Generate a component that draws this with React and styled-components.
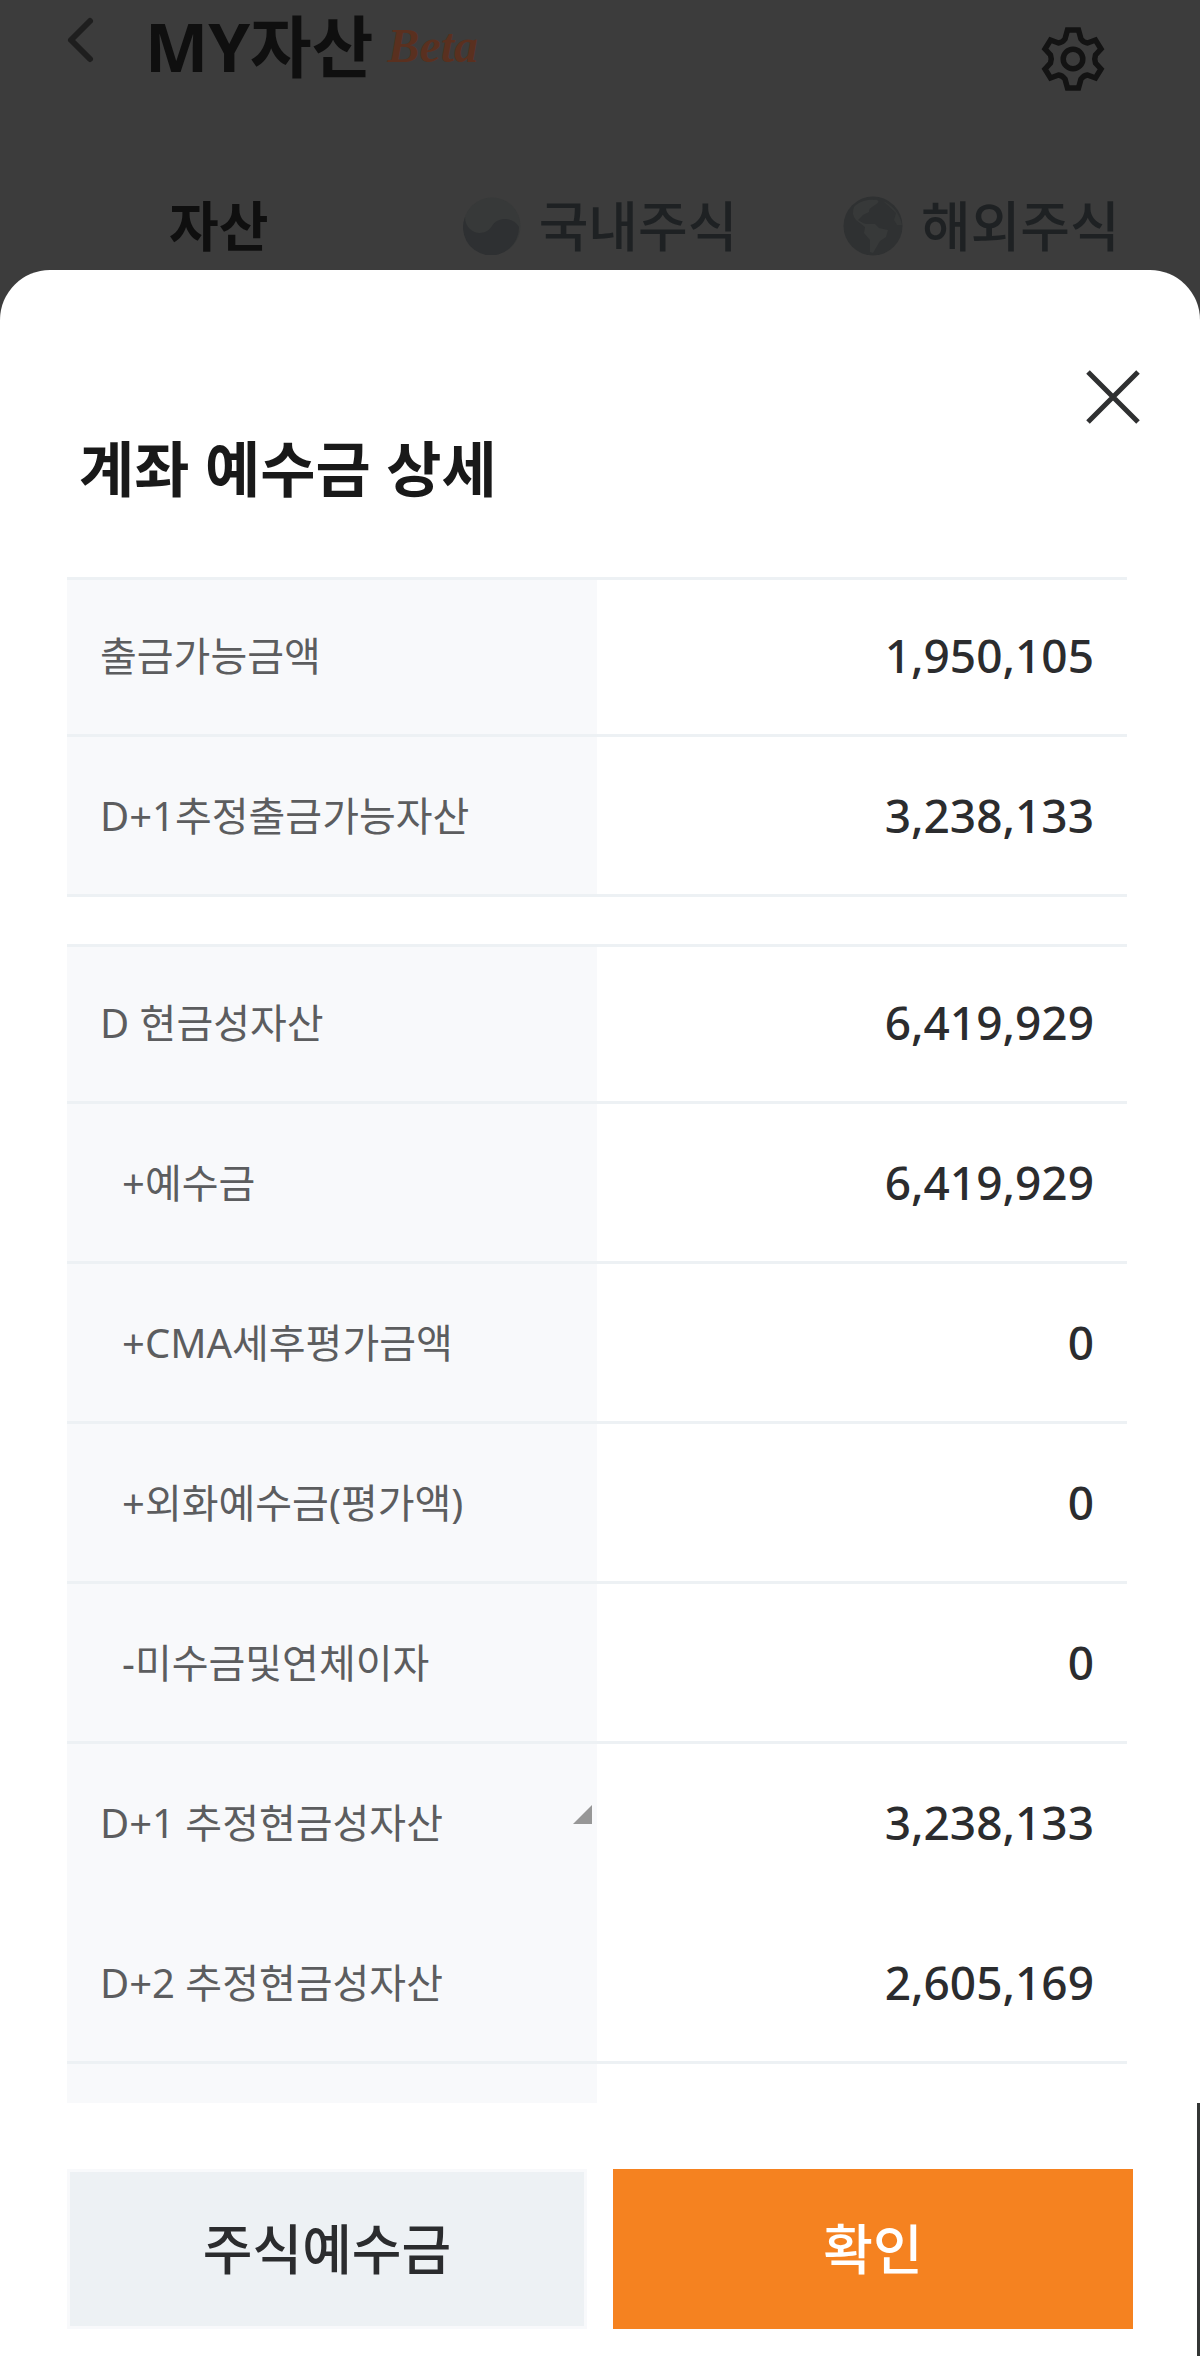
import React from 'react';
import styled, { createGlobalStyle, css } from 'styled-components';

const GlobalStyle = createGlobalStyle`
    * {
        box-sizing: border-box;
    }

    body {
        margin: 0;
        background: #3c3c3c;
        font-family: 'Noto Sans', 'Noto Sans CJK KR', sans-serif;
    }
`;

const Page = styled.div`
    display: flex;
    flex-direction: column;
    min-height: 100vh;
    background: #3c3c3c;
`;

const Header = styled.header`
    display: flex;
    align-items: flex-start;
    padding: 0 92px 0 60px;
    height: 180px;
`;

const IconButton = styled.button`
    display: flex;
    padding: 0;
    border: none;
    background: none;
    cursor: pointer;
`;

const BackButton = styled(IconButton)`
    padding: 14px 0;
    margin-right: 45px;
`;

const SettingsButton = styled(IconButton)`
    margin-left: auto;
    padding-top: 23px;
`;

const PageTitle = styled.h1`
    margin: 0;
    font-size: 67px;
    line-height: 92px;
    font-weight: 700;
    color: #0f0f0f;
`;

const Beta = styled.em`
    margin-left: 14px;
    font-family: 'Liberation Serif', serif;
    font-size: 48px;
    line-height: 92px;
    font-weight: 700;
    font-style: italic;
    color: #5a301f;
`;

const Tabs = styled.nav`
    display: grid;
    grid-template-columns: repeat(3, 1fr);
    height: 90px;
    padding: 2px 28px 0;
`;

const Tab = styled.button`
    display: flex;
    align-items: center;
    justify-content: center;
    gap: 18px;
    padding: 0;
    border: none;
    background: none;
    font-family: inherit;
    font-size: 54px;
    line-height: 88px;
    font-weight: ${(props) => (props.$active ? 700 : 500)};
    color: ${(props) => (props.$active ? '#0f0f0f' : '#1e2123')};
    cursor: pointer;
`;

const Sheet = styled.section`
    display: flex;
    flex-direction: column;
    flex: 1;
    border-radius: 50px 50px 0 0;
    background: #fff;
`;

const SheetHeader = styled.div`
    display: flex;
    flex-direction: column;
    padding: 98px 58px 65px 79px;
`;

const CloseButton = styled(IconButton)`
    align-self: flex-end;
`;

const SheetTitle = styled.h2`
    margin: 0;
    font-size: 60px;
    line-height: 86px;
    font-weight: 700;
    color: #191919;
`;

const SheetBody = styled.div`
    display: flex;
    flex-direction: column;
    gap: 47px;
    padding: 0 73px 0 67px;
`;

const Table = styled.table`
    width: 100%;
    table-layout: fixed;
    border-spacing: 0;
`;

const cell = css`
    height: 160px;
    padding: 0 33px 4px;
    border-bottom: 3px solid ${(props) => (props.$open ? 'transparent' : '#edf1f4')};

    tr:first-child > & {
        padding-bottom: 7px;
        border-top: 3px solid #edf1f4;
    }
`;

const LabelCell = styled.th`
    ${cell}
    position: relative;
    padding-left: ${(props) => (props.$sub ? 55 : 33)}px;
    background: #f8f9fb;
    font-size: 40px;
    font-weight: 400;
    text-align: left;
    color: #5c5d5f;
`;

const ValueCell = styled.td`
    ${cell}
    padding-top: 3px;
    font-size: 46px;
    font-weight: 500;
    text-align: right;
    color: #2b2c2e;
`;

const RestCell = styled.td`
    height: 39px;
    padding: 0;
    background: ${(props) => (props.$shaded ? '#f8f9fb' : 'none')};
`;

/* Corner mark on rows that can be expanded */
const Corner = styled.svg`
    position: absolute;
    top: 60px;
    right: 5px;
`;

const Footer = styled.footer`
    display: grid;
    grid-template-columns: 1fr 1fr;
    gap: 26px;
    flex: 1;
    align-items: start;
    padding: 66px 64px 27px 67px;
    border-right: 3px solid #343635;
`;

const Button = styled.button`
    height: 160px;
    padding: 0 0 6px;
    border: 3px solid ${(props) => (props.$primary ? '#f58220' : '#f8f9fb')};
    background: ${(props) => (props.$primary ? '#f58220' : '#edf1f4')};
    background-clip: padding-box;
    font-family: inherit;
    font-size: 54px;
    font-weight: 500;
    color: ${(props) => (props.$primary ? '#fff' : '#2b2c2e')};
    cursor: pointer;
`;

const BackIcon = () => (
    <svg width="40" height="52" viewBox="0 0 40 52" fill="none" aria-hidden="true">
        <path d="M30 7 L11 26 L30 45" stroke="#1e1e1e" strokeWidth="6" strokeLinecap="round" strokeLinejoin="round" />
    </svg>
);

const GearIcon = () => (
    <svg width="70" height="72" viewBox="-35 -36 70 72" fill="none" stroke="#131313" strokeWidth="5.5" aria-hidden="true">
        <path d="M-5.5 -29 H5.5 L8 -20 Q10.5 -16.5 14.5 -16 L22.5 -19 L28 -10 L22.5 -4 Q21 0 22.5 4 L28 10 L22.5 19 L14.5 16 Q10.5 16.5 8 20 L5.5 29 H-5.5 L-8 20 Q-10.5 16.5 -14.5 16 L-22.5 19 L-28 10 L-22.5 4 Q-21 0 -22.5 -4 L-28 -10 L-22.5 -19 L-14.5 -16 Q-10.5 -16.5 -8 -20 Z" />
        <circle r="9.8" />
    </svg>
);

const TaegukIcon = () => (
    <svg width="58" height="58" viewBox="0 0 58 58" aria-hidden="true">
        <circle cx="29" cy="29" r="28.5" fill="#373939" />
        <path d="M2 20 C2 37 22 41 29 29 C34 20 50 19 56 30 A28 28 0 1 1 2 20 Z" fill="#2e3032" />
    </svg>
);

const GlobeIcon = () => (
    <svg width="60" height="60" viewBox="0 0 60 60" aria-hidden="true">
        <circle cx="30" cy="30" r="29.5" fill="#2f3132" />
        <path d="M11 11 C16 5 26 3 31 4 C35 3 38 6 32 9 C28 12 26 12 26 16 L20 19 L15 24 L20 27 L23 28 L32 28 L36 32 L45 34 L43 41 L37 45 L30 57 L27 56 L27 44 L21 37 L22 31 L13 24 Q8 18 11 11 Z" fill="#373939" />
        <path d="M40 5 C50 9 57 18 59 29 L54 29 L51 24 L53 17 Z" fill="#353737" />
    </svg>
);

const CloseIcon = () => (
    <svg width="58" height="58" viewBox="0 0 58 58" aria-hidden="true">
        <path d="M4 4 L54 54 M54 4 L4 54" stroke="#2f3031" strokeWidth="5" />
    </svg>
);

const withdrawable = [
    { label: '출금가능금액', value: '1,950,105' },
    { label: 'D+1추정출금가능자산', value: '3,238,133' },
];

const cashAssets = [
    { label: 'D 현금성자산', value: '6,419,929' },
    { label: '+예수금', value: '6,419,929', sub: true },
    { label: '+CMA세후평가금액', value: '0', sub: true },
    { label: '+외화예수금(평가액)', value: '0', sub: true },
    { label: '-미수금및연체이자', value: '0', sub: true },
    { label: 'D+1 추정현금성자산', value: '3,238,133', open: true, corner: true },
    { label: 'D+2 추정현금성자산', value: '2,605,169' },
];

const AmountTable = ({ rows, more }) => (
    <Table>
        <tbody>
            {rows.map((row) => (
                <tr key={row.label}>
                    <LabelCell scope="row" $sub={row.sub} $open={row.open}>
                        {row.label}
                        {row.corner && (
                            <Corner width="20" height="20" viewBox="0 0 20 20" aria-hidden="true">
                                <path d="M20 1 V20 H1 Z" fill="#979797" />
                            </Corner>
                        )}
                    </LabelCell>
                    <ValueCell $open={row.open}>{row.value}</ValueCell>
                </tr>
            ))}
            {more && (
                <tr>
                    <RestCell $shaded />
                    <RestCell />
                </tr>
            )}
        </tbody>
    </Table>
);

const App = () => {
    return (
        <Page>
            <GlobalStyle />
            <Header>
                <BackButton aria-label="뒤로">
                    <BackIcon />
                </BackButton>
                <PageTitle>MY자산</PageTitle>
                <Beta>Beta</Beta>
                <SettingsButton aria-label="설정">
                    <GearIcon />
                </SettingsButton>
            </Header>
            <Tabs>
                <Tab $active>자산</Tab>
                <Tab>
                    <TaegukIcon />
                    국내주식
                </Tab>
                <Tab>
                    <GlobeIcon />
                    해외주식
                </Tab>
            </Tabs>
            <Sheet>
                <SheetHeader>
                    <CloseButton aria-label="닫기">
                        <CloseIcon />
                    </CloseButton>
                    <SheetTitle>계좌 예수금 상세</SheetTitle>
                </SheetHeader>
                <SheetBody>
                    <AmountTable rows={withdrawable} />
                    <AmountTable rows={cashAssets} more />
                </SheetBody>
                <Footer>
                    <Button>주식예수금</Button>
                    <Button $primary>확인</Button>
                </Footer>
            </Sheet>
        </Page>
    );
};

export default App;
